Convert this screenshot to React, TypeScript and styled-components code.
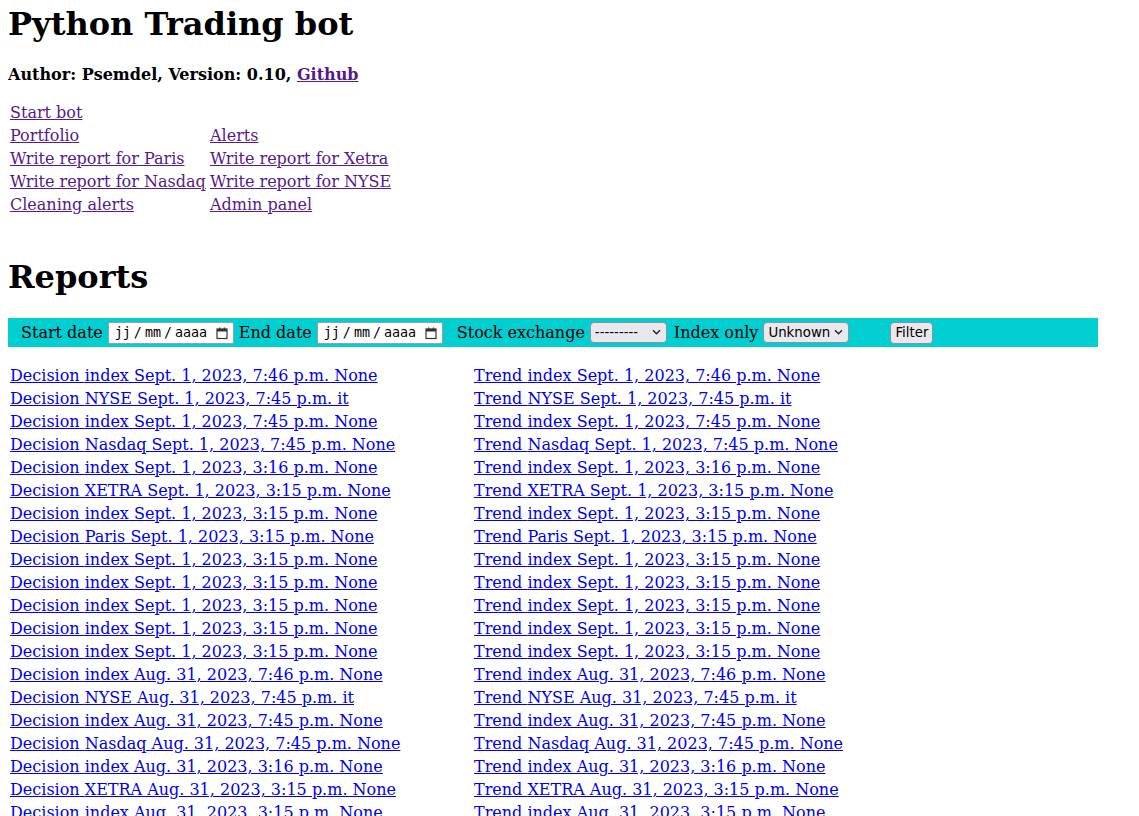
import React from "react";
import styled, { createGlobalStyle } from "styled-components";

const GlobalStyle = createGlobalStyle`
  html { overflow: hidden; }
  body {
    margin: 0 8px 8px;
    font-family: "DejaVu Serif", serif;
    font-size: 16px;
    color: #000;
    background: #fff;
  }
`;

const Title = styled.h1<{ $top?: number; $bottom?: number }>`
  font-size: 32px;
  font-weight: bold;
  margin: ${(p) => p.$top ?? 21.44}px 0 ${(p) => p.$bottom ?? 21.44}px;
`;

const Byline = styled.h4`
  font-size: 16px;
  font-weight: bold;
  margin: 22.28px 0 17px;
`;

const Link = styled.a<{ $visited?: boolean }>`
  color: ${(p) => (p.$visited ? "#551a8b" : "#0000ee")};
  text-decoration: underline;
  cursor: pointer;
`;

const NavGrid = styled.nav`
  display: grid;
  grid-template-columns: 200px auto;
  justify-content: start;
  padding: 0 2px;
  line-height: 19px;
`;

const NavCell = styled.div`
  padding: 2px 0;
  white-space: nowrap;
`;

const Spacer = styled.br``;

const FilterBar = styled.form`
  display: flex;
  align-items: center;
  width: 1091px;
  height: 29px;
  margin-left: -1px;
  padding-left: 14px;
  box-sizing: border-box;
  background: #00ced1;
`;

const FieldLabel = styled.label<{ $ml?: number }>`
  margin-left: ${(p) => p.$ml ?? 0}px;
  margin-right: 5px;
  white-space: nowrap;
`;

const DateBox = styled.div`
  display: inline-flex;
  align-items: center;
  box-sizing: border-box;
  width: 126px;
  height: 22px;
  padding: 0 4px 0 6px;
  border: 1px solid #a0a0a0;
  border-radius: 2px;
  background: #fff;
  font-family: "DejaVu Sans Mono", monospace;
  font-size: 13.33px;
  color: #000;
`;

const DatePart = styled.span``;
const DateSep = styled.span`
  margin: 0 3px;
`;

const CalIcon = styled.svg`
  margin-left: auto;
  width: 14px;
  height: 14px;
`;

const SelectWrap = styled.span<{ $w: number }>`
  position: relative;
  display: inline-block;
  width: ${(p) => p.$w}px;
  height: 21px;
`;

const Select = styled.select`
  appearance: none;
  box-sizing: border-box;
  width: 100%;
  height: 100%;
  margin: 0;
  padding: 0 18px 0 4px;
  border: 1px solid #8f8f9d;
  border-radius: 4px;
  background: #e9e9ed;
  color: #000;
  font-size: 13.33px;
  font-family: "DejaVu Sans", sans-serif;
`;

const Chevron = styled.svg`
  position: absolute;
  right: 6px;
  top: 7px;
  width: 9px;
  height: 6px;
  pointer-events: none;
`;

const SubmitButton = styled.button`
  box-sizing: border-box;
  margin-left: 41px;
  width: 43px;
  height: 22px;
  padding: 0;
  border: 1px solid #8f8f9d;
  border-radius: 4px;
  background: #e9e9ed;
  color: #000;
  font-size: 13.33px;
  font-family: "DejaVu Sans", sans-serif;
`;

const ReportGrid = styled.div`
  display: grid;
  grid-template-columns: 464px auto;
  justify-content: start;
  padding: 17px 2px 0;
  line-height: 19px;
`;

const ReportCell = styled.div`
  padding: 2px 0;
  white-space: nowrap;
`;

const Calendar = () => (
  <CalIcon viewBox="0 0 14 14">
    <rect x="2" y="3" width="10" height="9.5" fill="none" stroke="#333" strokeWidth="1.2" />
    <rect x="2" y="3" width="10" height="2.5" fill="#333" />
    <rect x="4" y="1.5" width="1.2" height="2" fill="#333" />
    <rect x="8.8" y="1.5" width="1.2" height="2" fill="#333" />
  </CalIcon>
);

const DateField = () => (
  <DateBox>
    <DatePart>jj</DatePart>
    <DateSep>/</DateSep>
    <DatePart>mm</DatePart>
    <DateSep>/</DateSep>
    <DatePart>aaaa</DatePart>
    <Calendar />
  </DateBox>
);

const Dropdown = ({ w, options }: { w: number; options: string[] }) => (
  <SelectWrap $w={w}>
    <Select defaultValue={options[0]}>
      {options.map((o) => (
        <option key={o} value={o}>
          {o}
        </option>
      ))}
    </Select>
    <Chevron viewBox="0 0 9 6">
      <path d="M1 1.2 L4.5 4.7 L8 1.2" fill="none" stroke="#222" strokeWidth="1.4" />
    </Chevron>
  </SelectWrap>
);

const navRows: [string, string | null][] = [
  ["Start bot", null],
  ["Portfolio", "Alerts"],
  ["Write report for Paris", "Write report for Xetra"],
  ["Write report for Nasdaq", "Write report for NYSE"],
  ["Cleaning alerts", "Admin panel"],
];

const reportSuffixes = [
  "index Sept. 1, 2023, 7:46 p.m. None",
  "NYSE Sept. 1, 2023, 7:45 p.m. it",
  "index Sept. 1, 2023, 7:45 p.m. None",
  "Nasdaq Sept. 1, 2023, 7:45 p.m. None",
  "index Sept. 1, 2023, 3:16 p.m. None",
  "XETRA Sept. 1, 2023, 3:15 p.m. None",
  "index Sept. 1, 2023, 3:15 p.m. None",
  "Paris Sept. 1, 2023, 3:15 p.m. None",
  "index Sept. 1, 2023, 3:15 p.m. None",
  "index Sept. 1, 2023, 3:15 p.m. None",
  "index Sept. 1, 2023, 3:15 p.m. None",
  "index Sept. 1, 2023, 3:15 p.m. None",
  "index Sept. 1, 2023, 3:15 p.m. None",
  "index Aug. 31, 2023, 7:46 p.m. None",
  "NYSE Aug. 31, 2023, 7:45 p.m. it",
  "index Aug. 31, 2023, 7:45 p.m. None",
  "Nasdaq Aug. 31, 2023, 7:45 p.m. None",
  "index Aug. 31, 2023, 3:16 p.m. None",
  "XETRA Aug. 31, 2023, 3:15 p.m. None",
  "index Aug. 31, 2023, 3:15 p.m. None",
];

export default function App() {
  return (
    <>
      <GlobalStyle />
      <Title $top={5}>Python Trading bot</Title>
      <Byline>
        Author: Psemdel, Version: 0.10, <Link $visited>Github</Link>
      </Byline>
      <NavGrid>
        {navRows.map(([a, b], i) => (
          <React.Fragment key={i}>
            <NavCell>
              <Link $visited>{a}</Link>
            </NavCell>
            <NavCell>{b && <Link $visited>{b}</Link>}</NavCell>
          </React.Fragment>
        ))}
      </NavGrid>
      <Spacer />
      <Title $top={22.5} $bottom={22.44}>Reports</Title>
      <FilterBar>
        <FieldLabel>Start date</FieldLabel>
        <DateField />
        <FieldLabel $ml={5}>End date</FieldLabel>
        <DateField />
        <FieldLabel $ml={14}>Stock exchange</FieldLabel>
        <Dropdown w={77} options={["---------", "Paris", "XETRA", "Nasdaq", "NYSE"]} />
        <FieldLabel $ml={7}>Index only</FieldLabel>
        <Dropdown w={86} options={["Unknown", "Yes", "No"]} />
        <SubmitButton type="button">Filter</SubmitButton>
      </FilterBar>
      <ReportGrid>
        {reportSuffixes.map((s, i) => (
          <React.Fragment key={i}>
            <ReportCell>
              <Link>Decision {s}</Link>
            </ReportCell>
            <ReportCell>
              <Link>Trend {s}</Link>
            </ReportCell>
          </React.Fragment>
        ))}
      </ReportGrid>
    </>
  );
}
